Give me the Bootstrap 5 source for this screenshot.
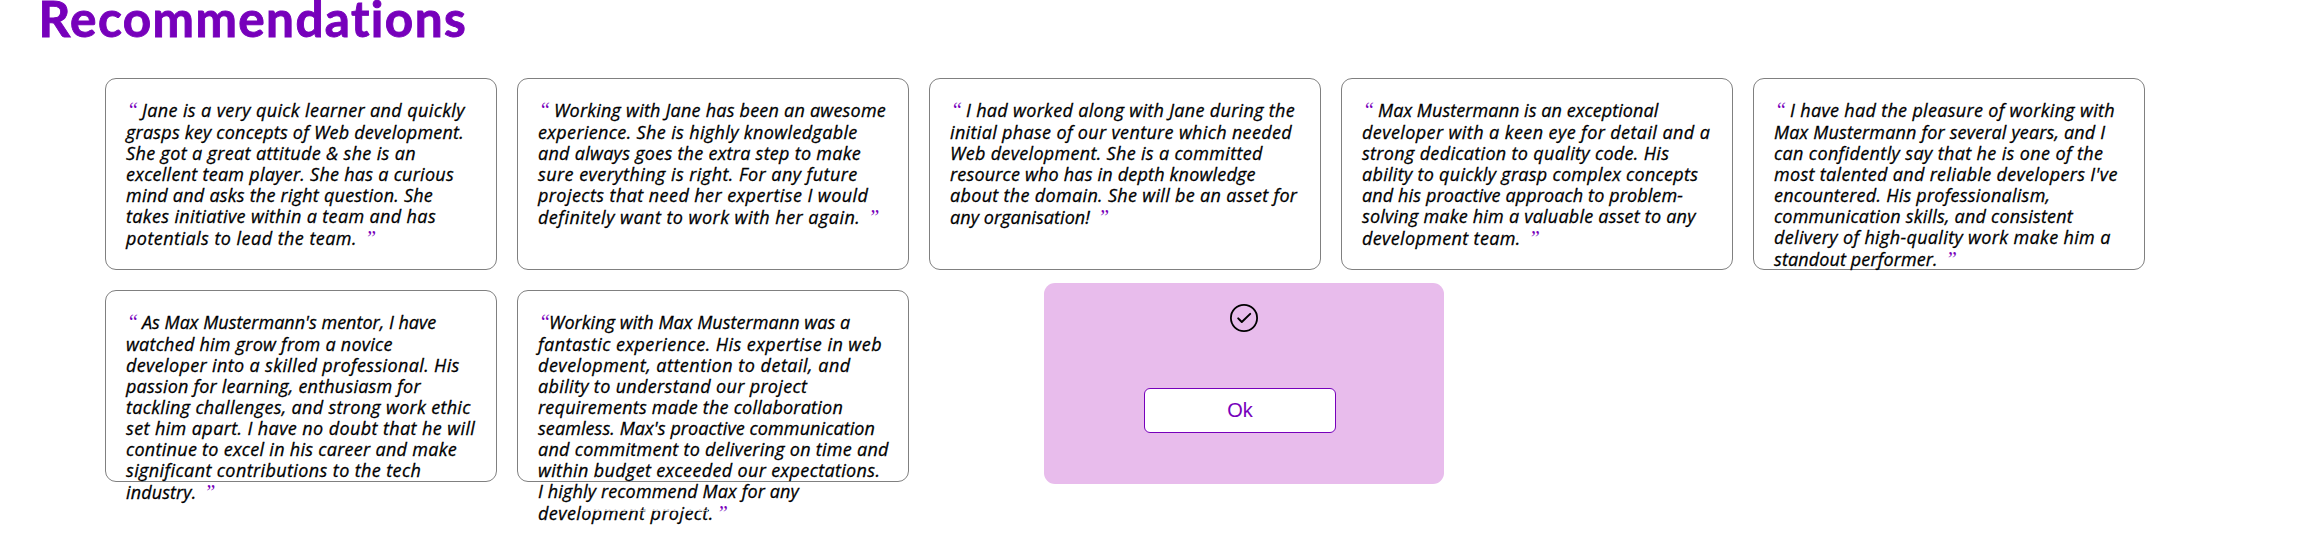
<!DOCTYPE html>
<html lang="en">
<head>
<meta charset="utf-8">
<title>Recommendations</title>
<link href="https://cdn.jsdelivr.net/npm/bootstrap@5.3.0/dist/css/bootstrap.min.css" rel="stylesheet">
<style>
:root { --accent: #7700bb; }
body { background: #fff; color: #000; height: 553px; overflow: hidden; font-family: "Open Sans", sans-serif; }
.page-title { color: var(--accent); font-family: Lato, sans-serif; font-size: 49.5px; font-weight: 700; line-height: 60px; height: 60px; margin: -12px 0 0 38.5px; white-space: nowrap; -webkit-text-stroke: 0.9px var(--accent); }
.quotes { padding: 30px 0 0 105px; gap: 20px; width: 2160px; }
.quote-card { width: 392px; height: 192px; border: 1px solid #808080; border-radius: 11px; padding: 21px 0 0 20px; background: transparent; }
.quote-line { font-size: 18px; font-style: italic; font-weight: 400; line-height: 21px; height: 21px; white-space: nowrap; -webkit-text-stroke: 0.28px #000; }
.quote-line:first-child { margin-bottom: 1px; }
.quote-line:last-child { margin-top: 1px; }
.qm { color: var(--accent); font-family: "Liberation Serif", serif; font-size: 20px; display: inline-block; height: 21px; vertical-align: top; -webkit-text-stroke: 0; }
.qm-open { width: 16px; padding-left: 1px; }
.tight .qm-open { width: 11px; }
.qm-close { margin-left: 8px; }
.tight .qm-close { margin-left: 3px; }
.tight .quote-line:last-child::after { content: ""; position: absolute; left: 62px; top: 219px; width: 128px; height: 1px; background: rgba(255,255,255,.8); }
.dialog-box { left: 1044px; top: 282.6px; width: 400px; height: 201px; background: #e8bcec; border-radius: 11px; padding-top: 20px; }
.dialog-box svg { margin-top: -.6px; }
.ok-btn, .ok-btn:hover { width: 192px; height: 45.5px; margin: 53.7px 8px 0 0; padding: 0; background: #fff; color: var(--accent); border: 1px solid var(--accent); border-radius: 6px; }
.ok-label { font-family: "Liberation Sans", Arial, sans-serif; font-size: 20px; line-height: 43px; font-weight: 400; }
</style>
<script src="https://cdn.jsdelivr.net/npm/bootstrap@5.3.0/dist/js/bootstrap.bundle.min.js"></script>
</head>
<body>
<h1 class="page-title"><span data-fit="429.5">Recommendations</span></h1>
<main class="quotes d-flex flex-wrap" id="quotes"></main>

<div class="dialog-box position-absolute d-flex flex-column align-items-center" role="dialog">
  <svg width="32" height="32" viewBox="0 0 32 32" fill="none" stroke="#000" stroke-width="1.8"><circle cx="16" cy="16" r="13.1"/><path d="M10.2 16.4 13.8 20 22.2 11.9" stroke-width="2" stroke-linecap="round" stroke-linejoin="round"/></svg>
  <button class="btn ok-btn d-flex justify-content-center align-items-center" type="button"><span class="ok-label">Ok</span></button>
</div>

<script>
// Each line is [text, width in px]; tight cards have no gap after the opening mark.
const cards = [
  { lines: [["Jane is a very quick learner and quickly",323],["grasps key concepts of Web development.",338],["She got a great attitude & she is an",290],["excellent team player. She has a curious",328],["mind and asks the right question. She",307],["takes initiative within a team and has",310],["potentials to lead the team.",231]] },
  { lines: [["Working with Jane has been an awesome",332],["experience. She is highly knowledgable",319.7],["and always goes the extra step to make",323],["sure everything is right. For any future",319.7],["projects that need her expertise I would",330.3],["definitely want to work with her again.",322.3]] },
  { lines: [["I had worked along with Jane during the",329],["initial phase of our venture which needed",342],["Web development. She is a committed",312.7],["resource who has in depth knowledge",305.7],["about the domain. She will be an asset for",347.3],["any organisation!",140]] },
  { lines: [["Max Mustermann is an exceptional",280.3],["developer with a keen eye for detail and a",348.3],["strong dedication to quality code. His",307.3],["ability to quickly grasp complex concepts",336.3],["and his proactive approach to problem-",321],["solving make him a valuable asset to any",333.7],["development team.",158.7]] },
  { lines: [["I have had the pleasure of working with",325],["Max Mustermann for several years, and I",331.3],["can confidently say that he is one of the",329.3],["most talented and reliable developers I've",343.7],["encountered. His professionalism,",276.3],["communication skills, and consistent",299],["delivery of high-quality work make him a",336.7],["standout performer.",163.7]] },
  { lines: [["As Max Mustermann's mentor, I have",294.3],["watched him grow from a novice",266.7],["developer into a skilled professional. His",333.7],["passion for learning, enthusiasm for",294.7],["tackling challenges, and strong work ethic",344.7],["set him apart. I have no doubt that he will",349.3],["continue to excel in his career and make",331],["significant contributions to the tech",295.3],["industry.",70.3]] },
  { tight: true, lines: [["Working with Max Mustermann was a",301.3],["fantastic experience. His expertise in web",344],["development, attention to detail, and",312.7],["ability to understand our project",269.3],["requirements made the collaboration",305],["seamless. Max's proactive communication",337],["and commitment to delivering on time and",350.7],["within budget exceeded our expectations.",342.3],["I highly recommend Max for any",261],["development project.",175.7]] }
];
const root = document.getElementById('quotes');
function mark(kind, ch) {
  const s = document.createElement('span');
  s.className = 'qm qm-' + kind;
  s.textContent = ch;
  return s;
}
cards.forEach(c => {
  const card = document.createElement('article');
  card.className = 'card quote-card' + (c.tight ? ' tight' : '');
  c.lines.forEach(([text, w], i) => {
    const line = document.createElement('div');
    line.className = 'quote-line';
    if (i === 0) line.append(mark('open', '“'));
    const t = document.createElement('span');
    t.textContent = text;
    t.dataset.fit = w;
    line.append(t);
    if (i === c.lines.length - 1) line.append(mark('close', '”'));
    card.append(line);
  });
  root.append(card);
});
// Track every line to its measured width.
document.querySelectorAll('[data-fit]').forEach(el => {
  const gap = (+el.dataset.fit - el.getBoundingClientRect().width) / el.textContent.length;
  el.style.letterSpacing = gap.toFixed(3) + 'px';
});
</script>
</body>
</html>
